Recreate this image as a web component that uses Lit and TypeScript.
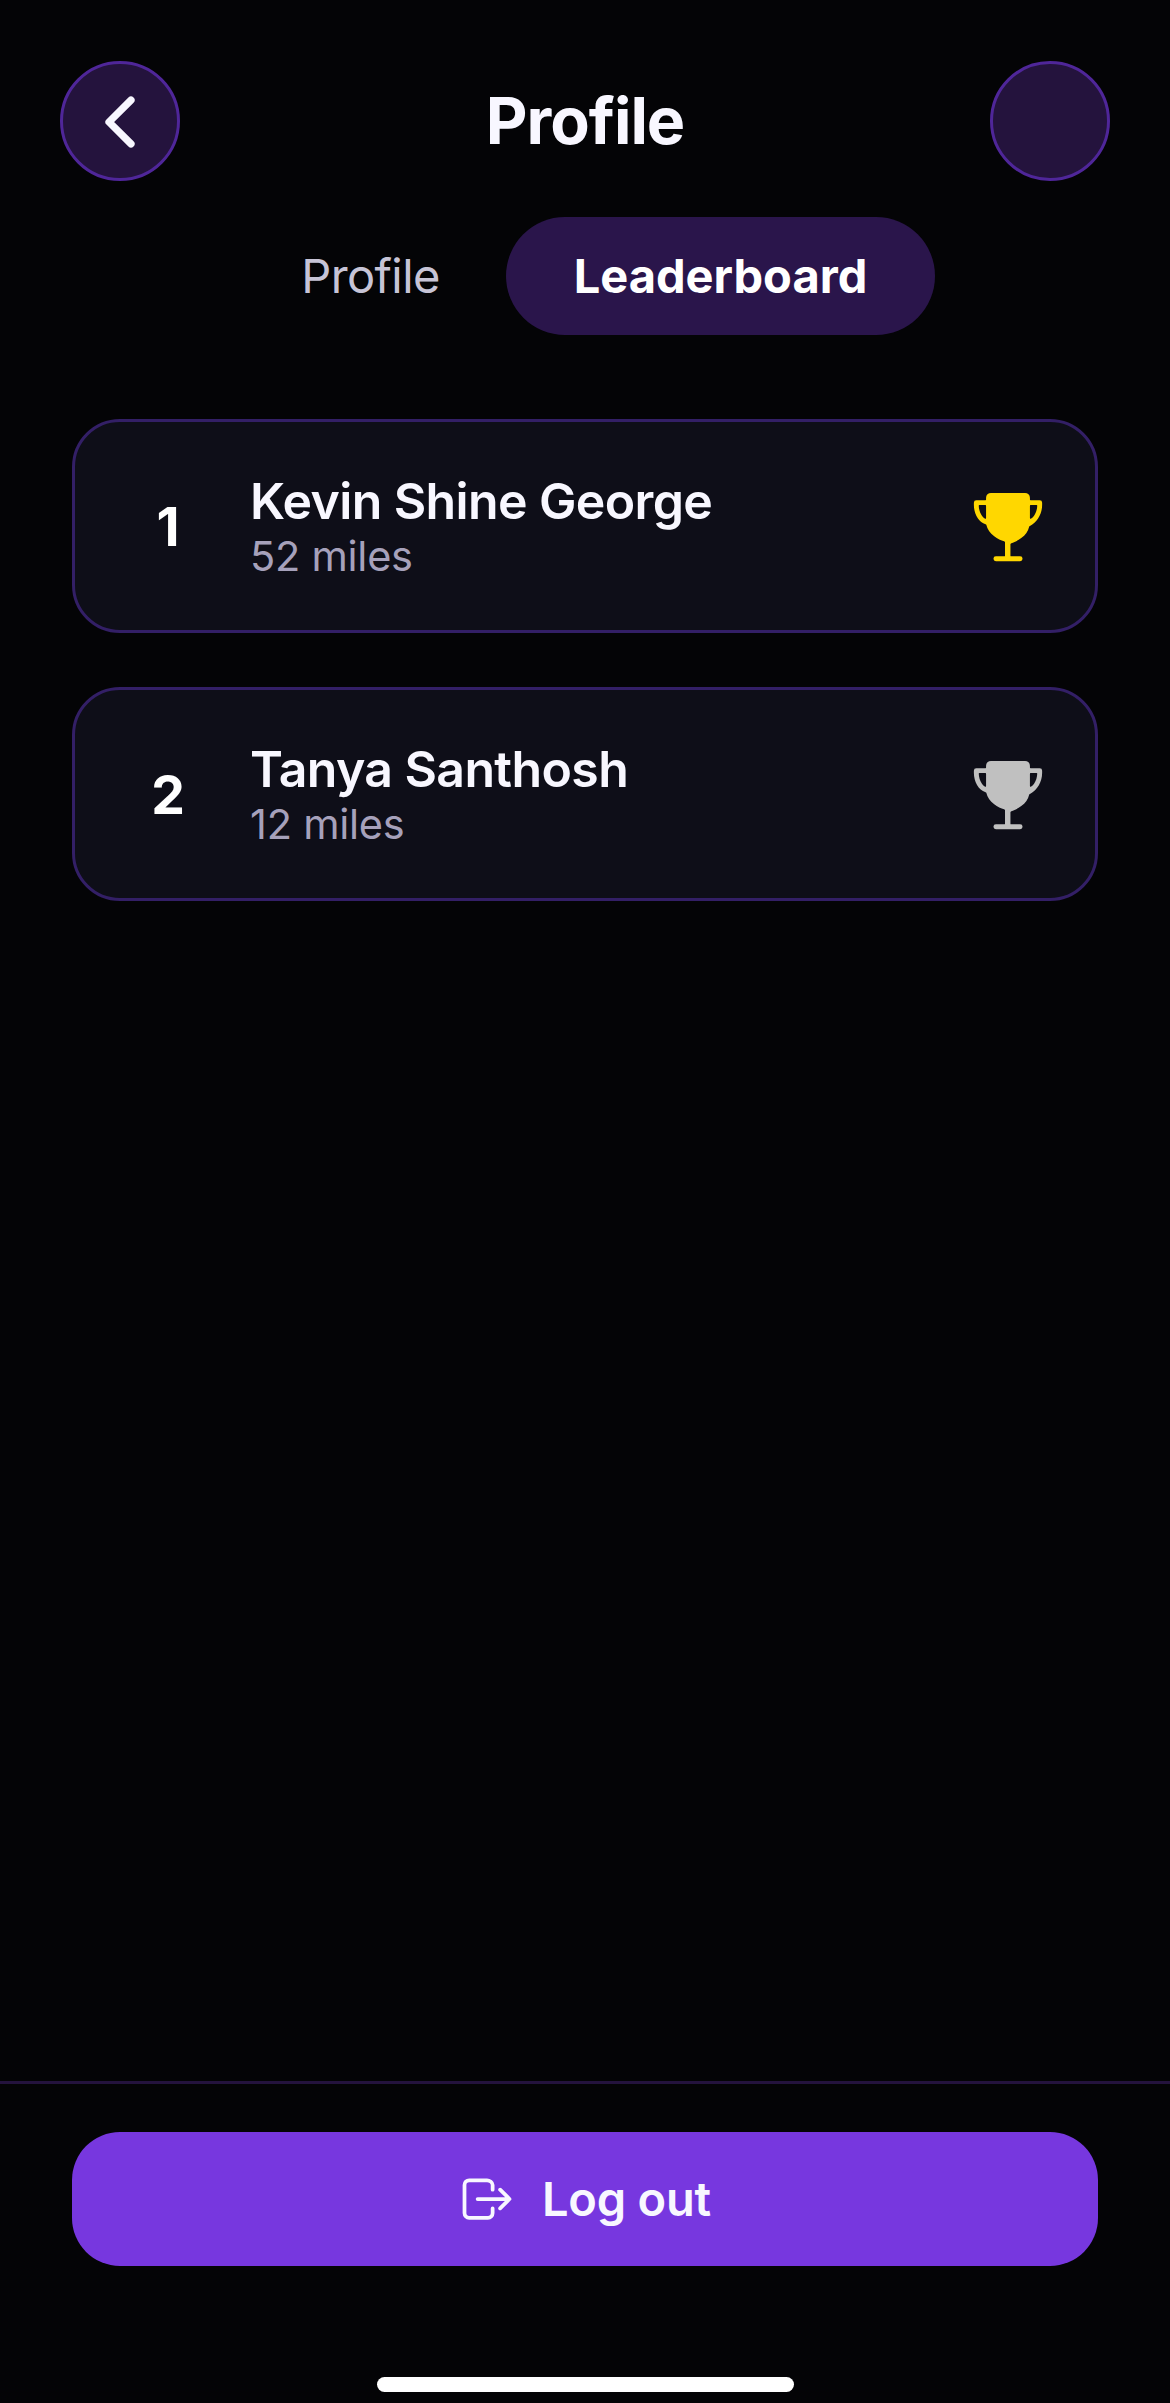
import { LitElement, html, css, svg } from "lit";
import { customElement, property, state } from "lit/decorators.js";

interface Runner {
  name: string;
  miles: number;
  medal: "gold" | "silver";
}

@customElement("leader-row")
export class LeaderRow extends LitElement {
  @property({ type: Number }) rank = 1;
  @property({ attribute: false }) runner!: Runner;

  static styles = css`
    :host {
      display: flex;
      align-items: center;
      box-sizing: border-box;
      height: 214px;
      padding: 0 51px 0 45px;
      border: 3px solid #331f66;
      border-radius: 48px;
      background: #0e0e18;
    }
    .rank {
      width: 96px;
      text-align: center;
      font-size: 53.5px;
      font-weight: 700;
      color: #ffffff;
    }
    .info {
      flex: 1;
      display: flex;
      flex-direction: column;
      padding-left: 34px;
    }
    .name {
      font-size: 50px;
      line-height: 60px;
      font-weight: 600;
      color: #f8f7ff;
      letter-spacing: -0.62px;
    }
    .miles {
      font-size: 41.5px;
      line-height: 51px;
      color: #a6a1bb;
      letter-spacing: -0.25px;
    }
    .trophy {
      width: 78px;
      height: 78px;
      margin-top: 1px;
      margin-right: -3px;
    }
    .gold {
      fill: #ffd700;
    }
    .silver {
      fill: #c0c0c0;
    }
  `;

  render() {
    return html`
      <div class="rank">${this.rank}</div>
      <div class="info">
        <div class="name">${this.runner.name}</div>
        <div class="miles">${this.runner.miles} miles</div>
      </div>
      <svg class="trophy ${this.runner.medal}" viewBox="0 0 512 512">
        ${svg`<path fill-rule="evenodd" d="M464 80H403.9a4 4 0 0 1-4-4V64A32 32 0 0 0 368 32H144a32 32 0 0 0-32 32v12a4 4 0 0 1-4 4H48a16 16 0 0 0-16 16v16c0 54.5 30 112.5 76.500 125.300a7.800 7.800 0 0 1 5.600 5.900c5.800 26.900 23.500 52.500 51.400 73.600 20.900 15.900 45.900 28.500 64.800 33.100a8 8 0 0 1 6.100 7.800V444a4 4 0 0 1-4 4H176.500a16 16 0 0 0 0 32h159a16 16 0 0 0 0-32H276a4 4 0 0 1-4-4v-74.300a8 8 0 0 1 6.100-7.800c19-4.600 43.900-17.300 64.800-33.100 27.900-21.100 45.600-46.700 51.400-73.600a7.800 7.800 0 0 1 5.600-5.900C450 224.500 480 166.500 480 112V96a16 16 0 0 0-16-16ZM112 198.200a4 4 0 0 1-6 3.500c-10.300-6.100-17.800-15.400-22.200-21.900C71.900 162.100 64.800 139.100 64 116.100A4 4 0 0 1 68 112h40a4 4 0 0 1 4 4Zm316.100-18.400c-4.400 6.500-11.900 15.800-22.200 21.900a4 4 0 0 1-6-3.500V116a4 4 0 0 1 4-4h40a4 4 0 0 1 4 4.100c-.8 23-7.900 46-19.800 63.700Z"/>`}
      </svg>
    `;
  }
}

@customElement("app-root")
export class AppRoot extends LitElement {
  @state() private tab = "Leaderboard";

  private readonly tabs = ["Profile", "Leaderboard"];
  private readonly runners: Runner[] = [
    { name: "Kevin Shine George", miles: 52, medal: "gold" },
    { name: "Tanya Santhosh", miles: 12, medal: "silver" },
  ];

  static styles = css`
    :host {
      display: flex;
      flex-direction: column;
      box-sizing: border-box;
      height: 2403px;
      overflow: hidden;
      background: #040406;
      color: #f8f7ff;
      font-family: Inter, "Liberation Sans", sans-serif;
    }
    header {
      display: flex;
      align-items: center;
      justify-content: space-between;
      padding: 61px 60px 0;
    }
    .round {
      display: flex;
      align-items: center;
      justify-content: center;
      box-sizing: border-box;
      width: 120px;
      height: 120px;
      padding: 0;
      border: 3px solid #4f2699;
      border-radius: 50%;
      background: #24133d;
    }
    .chevron {
      width: 78px;
      height: 78px;
      margin-top: 1px;
    }
    h1 {
      margin: 0;
      font-size: 64.5px;
      line-height: 78px;
      font-weight: 700;
      letter-spacing: -1px;
    }
    nav {
      display: grid;
      grid-template-columns: 271px 429px;
      justify-content: center;
      margin-top: 36px;
    }
    .tab {
      height: 118px;
      padding: 0;
      border: 0;
      border-radius: 60px;
      background: none;
      font: 400 47px/58px Inter, "Liberation Sans", sans-serif;
      letter-spacing: -0.6px;
      color: #c7c4d6;
    }
    .tab.active {
      background: #2a154b;
      font-weight: 700;
      letter-spacing: 0;
      color: #ffffff;
    }
    main {
      flex: 1;
      display: flex;
      flex-direction: column;
      gap: 54px;
      padding: 84px 72px 0;
    }
    footer {
      display: flex;
      flex-direction: column;
      align-items: center;
      box-sizing: border-box;
      height: 322px;
      padding: 48px 72px 0;
      border-top: 3px solid #24133d;
    }
    .logout {
      display: flex;
      align-items: center;
      justify-content: center;
      gap: 25px;
      width: 100%;
      height: 134px;
      padding: 0 2px 0 0;
      border: 0;
      border-radius: 48px;
      background: #7737df;
      color: #f8f7ff;
      font: 600 47px/58px Inter, "Liberation Sans", sans-serif;
      letter-spacing: -0.2px;
    }
    .exit {
      width: 60px;
      height: 60px;
    }
    .stroke {
      fill: none;
      stroke: #f8f7ff;
      stroke-width: 32;
      stroke-linecap: round;
      stroke-linejoin: round;
    }
    .bold {
      stroke-width: 48;
    }
    .home {
      width: 417px;
      height: 15px;
      margin-top: 111px;
      border-radius: 8px;
      background: #ffffff;
    }
  `;

  render() {
    return html`
      <header>
        <button class="round">
          <svg class="chevron stroke bold" viewBox="0 0 512 512">
            <path d="M328 112 184 256l144 144" />
          </svg>
        </button>
        <h1>Profile</h1>
        <div class="round"></div>
      </header>
      <nav>
        ${this.tabs.map(
          (t) => html`<button
            class="tab ${t === this.tab ? "active" : ""}"
            @click=${() => (this.tab = t)}
          >${t}</button>`
        )}
      </nav>
      <main>
        ${this.runners.map(
          (r, i) => html`<leader-row .rank=${i + 1} .runner=${r}></leader-row>`
        )}
      </main>
      <footer>
        <button class="logout">
          <svg class="exit stroke" viewBox="0 0 512 512">
            <path d="M304 336v40a40 40 0 0 1-40 40H104a40 40 0 0 1-40-40V136a40 40 0 0 1 40-40h152c22.090 0 48 17.910 48 40v40M368 336l80-80-80-80M176 256h256" />
          </svg>
          <span>Log out</span>
        </button>
        <div class="home"></div>
      </footer>
    `;
  }
}
